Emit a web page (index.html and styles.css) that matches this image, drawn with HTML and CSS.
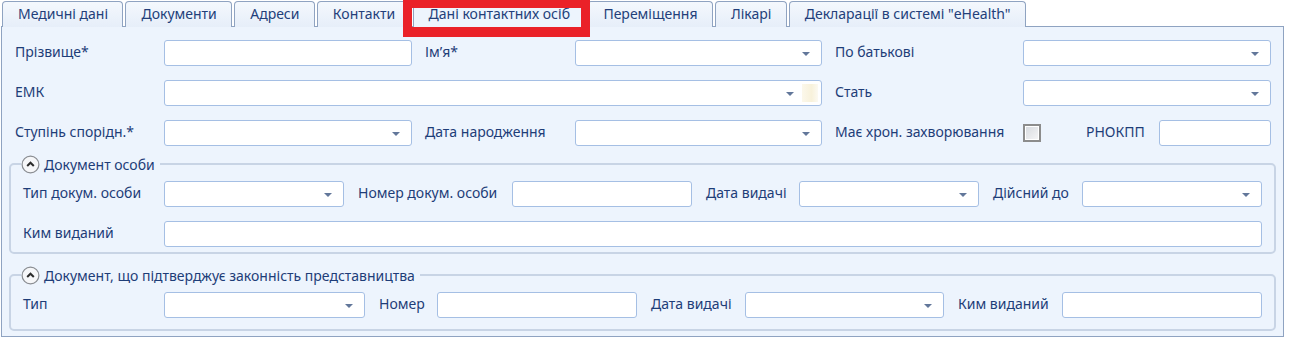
FILE: index.html
```html
<html>
<head>
    <title>Дані контактних осіб</title>
    <link rel="stylesheet" href="styles.css">
</head>
<body>
<main class="page">
    <nav class="tabs">
        <div class="tab">Медичні дані</div>
        <div class="tab">Документи</div>
        <div class="tab">Адреси</div>
        <div class="tab">Контакти</div>
        <div class="tab tab-active">Дані контактних осіб</div>
        <div class="tab">Переміщення</div>
        <div class="tab">Лікарі</div>
        <div class="tab">Декларації в системі "eHealth"</div>
    </nav>
    <div class="highlight"></div>

    <section class="panel">
        <div class="main-grid">
            <label class="field-label">Прізвище*</label>
            <div class="input"></div>
            <label class="field-label pad">Ім’я*</label>
            <div class="input combo"></div>
            <label class="field-label pad">По батькові</label>
            <div class="input combo"></div>

            <label class="field-label">ЕМК</label>
            <div class="input combo emk">
                <span class="book-icon"></span>
            </div>
            <label class="field-label pad">Стать</label>
            <div class="input combo"></div>

            <label class="field-label">Ступінь спорідн.*</label>
            <div class="input combo"></div>
            <label class="field-label pad">Дата народження</label>
            <div class="input combo"></div>
            <label class="field-label pad">Має хрон. захворювання</label>
            <div class="chron-cell">
                <span class="checkbox"></span>
                <label class="field-label rnokpp-label">РНОКПП</label>
                <div class="input rnokpp"></div>
            </div>
        </div>

        <fieldset class="group group-doc">
            <legend class="group-legend">
                <svg class="toggle" width="19" height="19" viewBox="0 0 19 19">
                    <circle cx="9.5" cy="9.5" r="8.4" fill="#f6f7f9" stroke="#8a8d92" stroke-width="1.2"/>
                    <path d="M6.2 11 L9.5 7.7 L12.8 11" fill="none" stroke="#2b2b2b" stroke-width="2"/>
                </svg>
                Документ особи
            </legend>
            <div class="doc-grid">
                <label class="field-label">Тип докум. особи</label>
                <div class="input combo"></div>
                <label class="field-label pad">Номер докум. особи</label>
                <div class="input"></div>
                <label class="field-label pad">Дата видачі</label>
                <div class="input combo"></div>
                <label class="field-label pad">Дійсний до</label>
                <div class="input combo"></div>

                <label class="field-label">Ким виданий</label>
                <div class="input wide"></div>
            </div>
        </fieldset>

        <fieldset class="group group-repr">
            <legend class="group-legend">
                <svg class="toggle" width="19" height="19" viewBox="0 0 19 19">
                    <circle cx="9.5" cy="9.5" r="8.4" fill="#f6f7f9" stroke="#8a8d92" stroke-width="1.2"/>
                    <path d="M6.2 11 L9.5 7.7 L12.8 11" fill="none" stroke="#2b2b2b" stroke-width="2"/>
                </svg>
                Документ, що підтверджує законність представництва
            </legend>
            <div class="repr-grid">
                <label class="field-label">Тип</label>
                <div class="input combo"></div>
                <label class="field-label pad">Номер</label>
                <div class="input"></div>
                <label class="field-label pad">Дата видачі</label>
                <div class="input combo"></div>
                <label class="field-label pad">Ким виданий</label>
                <div class="input"></div>
            </div>
        </fieldset>
    </section>
</main>
</body>
</html>
```

FILE: styles.css
```css
body {
    margin: 0;
    background: #ffffff;
    font-family: "Noto Sans", "Open Sans", sans-serif;
    font-size: 14px;
    color: #1e3d78;
}

.page {
    position: relative;
    width: 1289px;
}

.tabs {
    display: flex;
    height: 26px;
    padding: 1px 0 0 2px;
    box-sizing: border-box;
}

.tab {
    height: 26px;
    box-sizing: border-box;
    padding: 0 14.4px 0 15px;
    margin-right: 2px;
    border: 1px solid #8fa3c1;
    border-bottom: none;
    border-radius: 4px 4px 0 0;
    background: linear-gradient(#f4f8fd, #e6eef9);
    line-height: 24px;
    color: #233f7a;
    white-space: nowrap;
    position: relative;
    z-index: 1;
}

.tab-active {
    background: #edf4fd;
    height: 27px;
}

.highlight {
    position: absolute;
    left: 403px;
    top: 0;
    width: 187px;
    height: 37px;
    box-sizing: border-box;
    border: 9px solid #ea2128;
    border-top-width: 8px;
    border-bottom-width: 10px;
    z-index: 2;
}

.panel {
    margin-left: 1px;
    width: 1283px;
    box-sizing: border-box;
    border: 1px solid #8fa3c1;
    background: #edf4fd;
    padding: 13px 7px 5px 7px;
}

.main-grid {
    display: grid;
    grid-template-columns: 149px 248px 163px 247px 201px 248px;
    grid-auto-rows: 26px;
    row-gap: 14px;
    padding-left: 6px;
    align-items: center;
}

.field-label {
    display: block;
    white-space: nowrap;
    padding-bottom: 3px;
}

.pad {
    padding-left: 13px;
}

.input {
    height: 26px;
    box-sizing: border-box;
    border: 1px solid #a5bfe4;
    border-radius: 3px;
    background: #ffffff;
    position: relative;
}

.combo::after {
    content: "";
    position: absolute;
    right: 11px;
    top: 11px;
    border-left: 4px solid transparent;
    border-right: 4px solid transparent;
    border-top: 4px solid #62779a;
}

.emk {
    grid-column: 2 / 5;
}

.emk::after {
    right: 27px;
}

.book-icon {
    position: absolute;
    right: 3px;
    top: 3px;
    width: 16px;
    height: 18px;
    background: linear-gradient(90deg, #fbf6e6, #f6eed2 60%, #fbf8ee);
    opacity: 0.8;
}

.chron-cell {
    display: flex;
    align-items: center;
}

.checkbox {
    width: 18px;
    height: 18px;
    box-sizing: border-box;
    border: 2px solid #8c8c8c;
    background: linear-gradient(135deg, #d6d9de, #f6f6f7);
    box-shadow: inset 0 0 0 1px #ffffff;
    margin-right: 45px;
}

.rnokpp-label {
    width: 73px;
}

.rnokpp {
    width: 112px;
}

.group {
    margin: 8px 0 0 0;
    padding: 7px 12px 5px 12px;
    border: 2px solid #c8d4e5;
    border-radius: 5px;
    min-width: 0;
}

.group-repr {
    margin-top: 11px;
    padding-bottom: 11px;
}

.group-legend {
    display: flex;
    align-items: center;
    gap: 4px;
    height: 20px;
    padding: 0 5px 0 0;
    margin-left: -2px;
    font-size: 14px;
}

.toggle {
    display: block;
}

.doc-grid {
    display: grid;
    grid-template-columns: 141px 180px 168px 180px 107px 180px 103px 180px;
    grid-auto-rows: 26px;
    row-gap: 14px;
    align-items: center;
}

.doc-grid .pad,
.repr-grid .pad {
    padding-left: 14px;
}

.wide {
    grid-column: 2 / 9;
}

.repr-grid {
    display: grid;
    grid-template-columns: 141px 201px 72px 200px 108px 199px 118px 200px;
    grid-auto-rows: 26px;
    align-items: center;
}
```
